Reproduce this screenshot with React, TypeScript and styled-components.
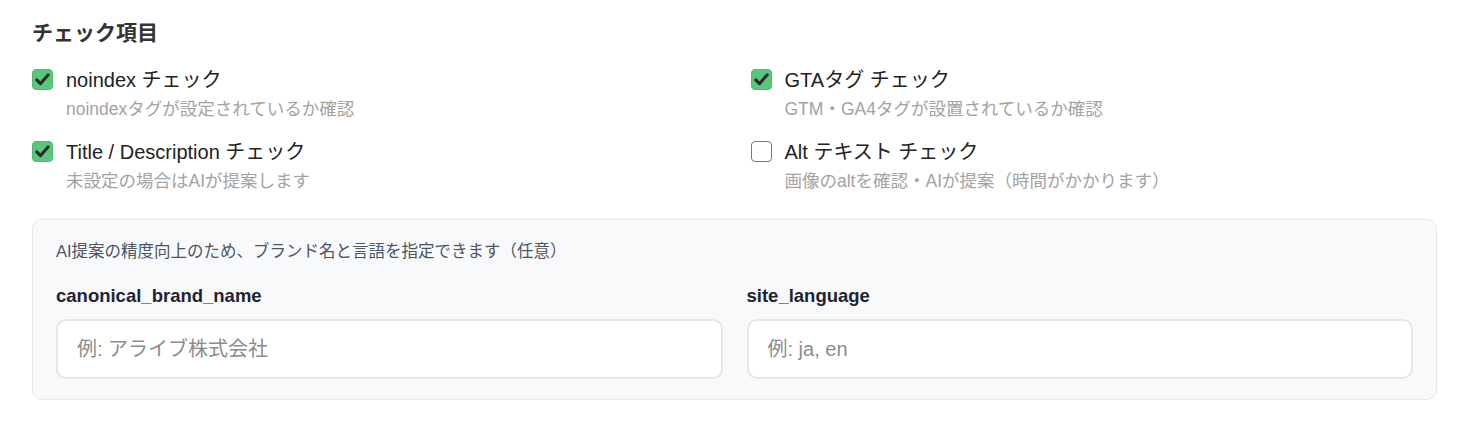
import styled, { createGlobalStyle } from 'styled-components';

const GlobalStyle = createGlobalStyle`
  body {
    margin: 0;
    background: #ffffff;
    font-family: "Liberation Sans", "Noto Sans CJK JP", sans-serif;
    color: #222222;
  }
`;

const Page = styled.div`
  padding: 19px 33px 0 32px;
  width: 1405px;
`;

const Heading = styled.h2`
  margin: 0 0 19px;
  font-size: 21px;
  line-height: 28px;
  font-weight: 700;
  color: #333333;
`;

const CheckGrid = styled.div`
  display: grid;
  grid-template-columns: 1fr 1fr;
  column-gap: 32px;
  row-gap: 16px;
`;

const CheckItem = styled.label`
  display: flex;
  align-items: flex-start;
  gap: 13px;
`;

const Box = styled.span<{ $checked: boolean }>`
  flex: none;
  box-sizing: border-box;
  width: 21px;
  height: 21px;
  margin-top: 3px;
  border-radius: 4px;
  display: flex;
  align-items: center;
  justify-content: center;
  background: ${p => (p.$checked ? '#5cc57c' : '#ffffff')};
  border: ${p => (p.$checked ? '1px solid #52b970' : '1.5px solid #767676')};
`;

const ItemText = styled.div`
  display: flex;
  flex-direction: column;
  gap: 2px;
`;

const ItemLabel = styled.span`
  font-size: 20px;
  line-height: 28px;
  color: #222222;
`;

const ItemDesc = styled.span`
  font-size: 17.5px;
  line-height: 26px;
  color: #a3a3a3;
`;

const Panel = styled.div`
  margin-top: 25px;
  border: 1px solid #e6e8ec;
  border-radius: 10px;
  background: #f8f9fb;
  padding: 19px 23px 20px;
`;

const PanelNote = styled.p`
  margin: 0 0 20px;
  font-size: 16.5px;
  line-height: 24px;
  color: #4b5563;
`;

const FieldRow = styled.div`
  display: grid;
  grid-template-columns: 1fr 1fr;
  column-gap: 24px;
`;

const Field = styled.div`
  display: flex;
  flex-direction: column;
  gap: 10px;
`;

const FieldLabel = styled.label`
  font-size: 18.5px;
  line-height: 26px;
  font-weight: 700;
  color: #1f2433;
`;

const TextInput = styled.input`
  box-sizing: border-box;
  height: 60px;
  width: 100%;
  border: 2px solid #e4e6ea;
  border-radius: 10px;
  background: #ffffff;
  padding: 0 19px;
  font-family: "Liberation Sans", "Noto Sans CJK JP", sans-serif;
  font-size: 20px;
  color: #222222;
  outline: none;

  &::placeholder {
    color: #8c8c8c;
  }
`;

interface checkItem {
  id: string;
  label: string;
  desc: string;
  checked: boolean;
}

const items: checkItem[] = [
  { id: 'noindex', label: 'noindex チェック', desc: 'noindexタグが設定されているか確認', checked: true },
  { id: 'gta', label: 'GTAタグ チェック', desc: 'GTM・GA4タグが設置されているか確認', checked: true },
  { id: 'title', label: 'Title / Description チェック', desc: '未設定の場合はAIが提案します', checked: true },
  { id: 'alt', label: 'Alt テキスト チェック', desc: '画像のaltを確認・AIが提案（時間がかかります）', checked: false },
];

const CheckMark = () => (
  <svg width="17" height="17" viewBox="0 0 16 16">
    <path d="M2.6 8.4 L6.1 11.9 L13.4 3.6" fill="none" stroke="#2a2a2a" strokeWidth="2.9" strokeLinecap="round" strokeLinejoin="round" />
  </svg>
);

const App = () => {
  return (
    <Page>
      <GlobalStyle />
      <Heading>チェック項目</Heading>
      <CheckGrid>
        {items.map(item => (
          <CheckItem key={item.id}>
            <Box $checked={item.checked}>{item.checked && <CheckMark />}</Box>
            <ItemText>
              <ItemLabel>{item.label}</ItemLabel>
              <ItemDesc>{item.desc}</ItemDesc>
            </ItemText>
          </CheckItem>
        ))}
      </CheckGrid>
      <Panel>
        <PanelNote>AI提案の精度向上のため、ブランド名と言語を指定できます（任意）</PanelNote>
        <FieldRow>
          <Field>
            <FieldLabel>canonical_brand_name</FieldLabel>
            <TextInput type="text" placeholder="例: アライブ株式会社" />
          </Field>
          <Field>
            <FieldLabel>site_language</FieldLabel>
            <TextInput type="text" placeholder="例: ja, en" />
          </Field>
        </FieldRow>
      </Panel>
    </Page>
  );
};

export default App;
